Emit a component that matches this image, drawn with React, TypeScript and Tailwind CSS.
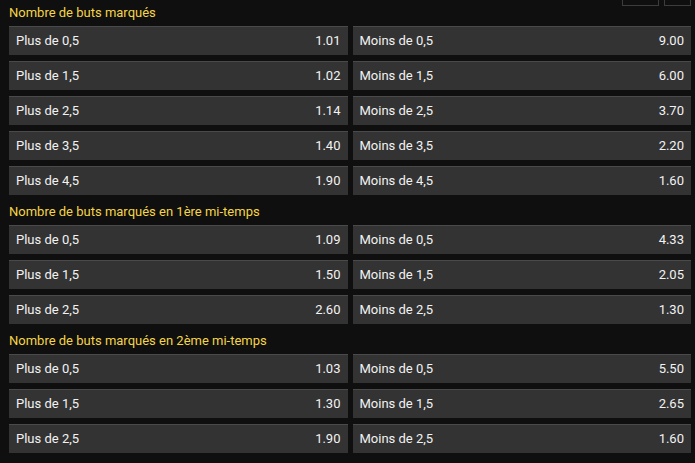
import React from "react";

type Row = [string, string, string, string];

const sections: { title: string; rows: Row[] }[] = [
  {
    title: "Nombre de buts marqués",
    rows: [
      ["Plus de 0,5", "1.01", "Moins de 0,5", "9.00"],
      ["Plus de 1,5", "1.02", "Moins de 1,5", "6.00"],
      ["Plus de 2,5", "1.14", "Moins de 2,5", "3.70"],
      ["Plus de 3,5", "1.40", "Moins de 3,5", "2.20"],
      ["Plus de 4,5", "1.90", "Moins de 4,5", "1.60"],
    ],
  },
  {
    title: "Nombre de buts marqués en 1ère mi-temps",
    rows: [
      ["Plus de 0,5", "1.09", "Moins de 0,5", "4.33"],
      ["Plus de 1,5", "1.50", "Moins de 1,5", "2.05"],
      ["Plus de 2,5", "2.60", "Moins de 2,5", "1.30"],
    ],
  },
  {
    title: "Nombre de buts marqués en 2ème mi-temps",
    rows: [
      ["Plus de 0,5", "1.03", "Moins de 0,5", "5.50"],
      ["Plus de 1,5", "1.30", "Moins de 1,5", "2.65"],
      ["Plus de 2,5", "1.90", "Moins de 2,5", "1.60"],
    ],
  },
];

function Cell({ label, odd }: { label: string; odd: string }) {
  return (
    <div className="h-[29px] flex items-center justify-between px-[7px] bg-[#333333] border-t border-[#4a4a4a] text-[13px] text-[#f2f2f2]">
      <span>{label}</span>
      <span>{odd}</span>
    </div>
  );
}

export default function App() {
  return (
    <div
      className="relative min-h-screen w-full bg-[#0f0f0f] pt-[2px] pl-[9px] pr-[4px]"
      style={{ fontFamily: "Roboto, 'Liberation Sans', sans-serif" }}
    >
      <div className="absolute top-0 right-[4px] flex gap-[5px]">
        <div className="w-[37px] h-[6px] border-x border-b border-[#3c3c3c]" />
        <div className="w-[27px] h-[6px] border-x border-b border-[#3c3c3c]" />
      </div>
      <div className="flex flex-col">
        {sections.map((s, i) => (
          <div key={i} className={i === 0 ? "" : "mt-[6px]"}>
            <div className="pt-[3px] leading-[16px] text-[13px] text-[#f5d547] mb-[5px]">{s.title}</div>
            <div className="grid grid-cols-2 gap-x-[5px] gap-y-[6px]">
              {s.rows.map((r, j) => (
                <React.Fragment key={j}>
                  <Cell label={r[0]} odd={r[1]} />
                  <Cell label={r[2]} odd={r[3]} />
                </React.Fragment>
              ))}
            </div>
          </div>
        ))}
      </div>
    </div>
  );
}
